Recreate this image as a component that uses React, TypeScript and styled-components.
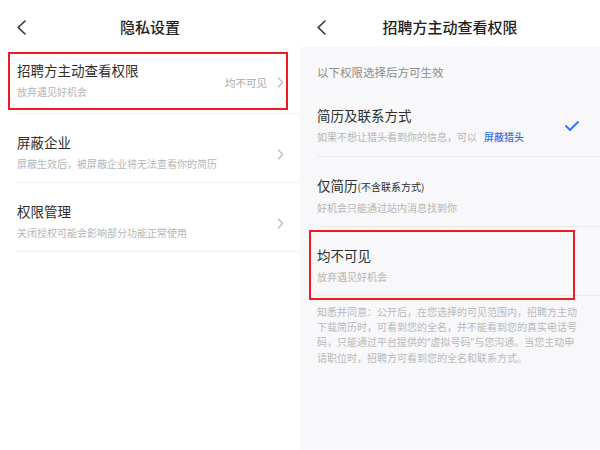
import React from "react";
import styled, { createGlobalStyle } from "styled-components";

const Global = createGlobalStyle`
  html, body { margin: 0; padding: 0; background: #fff; }
  body { font-family: "Noto Sans CJK SC", "Noto Sans", sans-serif; }
  * { box-sizing: border-box; }
`;

const Page = styled.div`
  display: flex;
  width: 600px;
  height: 450px;
  overflow: hidden;
  background: #fff;
`;

const Screen = styled.div<{ $bg: string }>`
  width: 300px;
  height: 450px;
  background: ${(p) => p.$bg};
  display: flex;
  flex-direction: column;
`;

const Header = styled.header`
  height: 47px;
  padding-top: 7px;
  background: #fff;
  display: grid;
  grid-template-columns: 1fr auto 1fr;
  align-items: center;
`;

const BackButton = styled.button`
  justify-self: start;
  margin-left: 17px;
  padding: 0;
  border: 0;
  background: none;
  display: flex;
  height: 15px;
`;

const Title = styled.h1`
  margin: 0;
  font-size: 15px;
  font-weight: 500;
  color: #222;
  line-height: 20px;
`;

const Row = styled.div<{ $first?: boolean }>`
  position: relative;
  margin-left: 16px;
  padding: ${(p) => (p.$first ? "15px 16px 14px 1px" : "20px 16px 11px 1px")};
  border-bottom: 1px solid #f0f0f0;
  display: flex;
  align-items: center;
`;

const TextBlock = styled.div`
  display: flex;
  flex-direction: column;
  gap: 6px;
`;

const RowTitle = styled.div`
  font-size: 13.5px;
  line-height: 17px;
  color: #2e2e2e;
  white-space: nowrap;
`;

const Small = styled.span`
  font-size: 10px;
`;

const RowSub = styled.div`
  font-size: 10px;
  line-height: 14px;
  color: #b5b5b5;
  white-space: nowrap;
  display: flex;
  align-items: center;
`;

const Link = styled.span`
  color: #2f72ec;
  font-weight: 500;
  margin-left: 7px;
`;

const Trail = styled.div`
  margin-left: auto;
  margin-top: 4px;
  display: flex;
  align-items: center;
  gap: 10px;
`;

const Value = styled.span`
  font-size: 10.5px;
  color: #a8a8a8;
`;

const Mark = styled.span<{ $top: number; $left: number; $w: number; $h: number }>`
  position: absolute;
  top: ${(p) => p.$top}px;
  left: ${(p) => p.$left}px;
  width: ${(p) => p.$w}px;
  height: ${(p) => p.$h}px;
  border: 2px solid #ec1c24;
  pointer-events: none;
`;

const Tip = styled.div`
  height: 41px;
  padding: 17px 0 0 17px;
  font-size: 11.5px;
  line-height: 16px;
  color: #8c8c8c;
`;

const Option = styled.div<{ $first?: boolean }>`
  position: relative;
  margin-left: 17px;
  padding: ${(p) => (p.$first ? "19px 21px 12px 0" : "20px 21px 11px 0")};
  border-bottom: 1px solid #ececee;
  display: flex;
  align-items: center;
`;

const Check = styled.div`
  margin-left: auto;
  display: flex;
`;

const Footer = styled.p`
  margin: 0;
  padding: 8px 17px;
  font-size: 10px;
  line-height: 15px;
  color: #b9b9b9;
  white-space: nowrap;
`;

const Quote = styled.span`
  font-family: "Noto Sans", sans-serif;
`;

const BackIcon = () => (
  <svg width="9" height="15" viewBox="0 0 9 15">
    <polyline points="8,1 1.2,7.5 8,14" fill="none" stroke="#333" strokeWidth="1.6" strokeLinecap="round" strokeLinejoin="round" />
  </svg>
);

const Chevron = () => (
  <svg width="7" height="11" viewBox="0 0 7 11">
    <polyline points="1.5,1 5.5,5.5 1.5,10" fill="none" stroke="#bdbdbd" strokeWidth="1.3" strokeLinecap="round" strokeLinejoin="round" />
  </svg>
);

const CheckIcon = () => (
  <svg width="14" height="10" viewBox="0 0 14 10">
    <polyline points="1,5 5,9 13,1" fill="none" stroke="#2f72ec" strokeWidth="1.8" strokeLinecap="round" strokeLinejoin="round" />
  </svg>
);

const settings = [
  { title: "屏蔽企业", sub: "屏蔽生效后，被屏蔽企业将无法查看你的简历" },
  { title: "权限管理", sub: "关闭授权可能会影响部分功能正常使用" },
];

export default function App() {
  return (
    <Page>
      <Global />
      <Screen $bg="#ffffff">
        <Header>
          <BackButton><BackIcon /></BackButton>
          <Title>隐私设置</Title>
          <span />
        </Header>
        <Row $first>
          <TextBlock>
            <RowTitle>招聘方主动查看权限</RowTitle>
            <RowSub>放弃遇见好机会</RowSub>
          </TextBlock>
          <Trail>
            <Value>均不可见</Value>
            <Chevron />
          </Trail>
          <Mark $top={5} $left={-8} $w={280} $h={58} />
        </Row>
        {settings.map((s) => (
          <Row key={s.title}>
            <TextBlock>
              <RowTitle>{s.title}</RowTitle>
              <RowSub>{s.sub}</RowSub>
            </TextBlock>
            <Trail>
              <Chevron />
            </Trail>
          </Row>
        ))}
      </Screen>
      <Screen $bg="#f8f8fa">
        <Header>
          <BackButton><BackIcon /></BackButton>
          <Title>招聘方主动查看权限</Title>
          <span />
        </Header>
        <Tip>以下权限选择后方可生效</Tip>
        <Option $first>
          <TextBlock>
            <RowTitle>简历及联系方式</RowTitle>
            <RowSub>
              如果不想让猎头看到你的信息，可以<Link>屏蔽猎头</Link>
            </RowSub>
          </TextBlock>
          <Check><CheckIcon /></Check>
        </Option>
        <Option>
          <TextBlock>
            <RowTitle>仅简历<Small>(不含联系方式)</Small></RowTitle>
            <RowSub>好机会只能通过站内消息找到你</RowSub>
          </TextBlock>
        </Option>
        <Option>
          <TextBlock>
            <RowTitle>均不可见</RowTitle>
            <RowSub>放弃遇见好机会</RowSub>
          </TextBlock>
          <Mark $top={3} $left={-8} $w={266} $h={70} />
        </Option>
        <Footer>
          知悉并同意：公开后，在您选择的可见范围内，招聘方主动<br />
          下载简历时，可看到您的全名，并不能看到您的真实电话号<br />
          码，只能通过平台提供的<Quote>“</Quote>虚拟号码<Quote>”</Quote>与您沟通。当您主动申<br />
          请职位时，招聘方可看到您的全名和联系方式。
        </Footer>
      </Screen>
    </Page>
  );
}
